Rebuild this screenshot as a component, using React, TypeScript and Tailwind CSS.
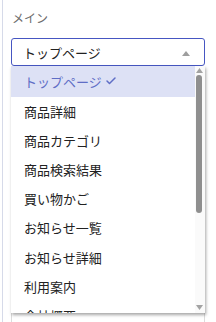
import { Check } from 'lucide-react'

const pages = [
  'トップページ',
  '商品詳細',
  '商品カテゴリ',
  '商品検索結果',
  '買い物かご',
  'お知らせ一覧',
  'お知らせ詳細',
  '利用案内',
  '会社概要',
]

export default function App() {
  const selected = 'トップページ'

  return (
    <div className="h-[322px] w-[216px] overflow-hidden bg-white font-['Noto_Sans_CJK_JP',sans-serif]">
      <div className="ml-[2px] h-full border-l border-[#d6dae9] pl-[8px] pr-[11px] pt-[11px]">
        {/* Label */}
        <div className="pl-[1px] text-[12px] leading-[14px] text-[#6b6b6b]">メイン</div>

        {/* Select + open menu */}
        <div className="relative mt-[13px]">
          <div className="flex h-[28px] items-center justify-between rounded-[3px] border border-[#4656c2] pl-[11px] pr-[14px]">
            <span className="text-[13px] leading-none text-[#222]">{selected}</span>
            <svg width="8" height="5" viewBox="0 0 8 5" className="mt-[2px]">
              <path d="M0 5 L4 0 L8 5 Z" fill="#9e9e9e" />
            </svg>
          </div>

          <div className="absolute left-0 right-0 top-[28px] z-10 flex h-[247px] bg-white shadow-[1px_2px_3px_rgba(0,0,0,0.35)]">
            <ul className="flex-1 overflow-hidden">
              {pages.map((p) => {
                const active = p === selected
                return (
                  <li
                    key={p}
                    className={
                      active
                        ? 'flex h-[30.5px] items-center gap-[3px] bg-[#dde1f5] pl-[13px] text-[13px] leading-none text-[#5f6ec6]'
                        : 'flex h-[29.2px] shrink-0 items-center pl-[13px] text-[13px] leading-none text-[#222]'
                    }
                  >
                    {p}
                    {active && <Check size={12} strokeWidth={3} />}
                  </li>
                )
              })}
            </ul>

            {/* Scrollbar */}
            <div className="flex w-[10px] flex-col items-center bg-[#fafafa] pr-[2px]">
              <svg width="7" height="5" viewBox="0 0 7 5" className="mt-[2px]">
                <path d="M0 5 L3.5 0 L7 5 Z" fill="#a3a3a3" />
              </svg>
              <div className="mt-[2px] h-[138px] w-[6px] rounded-[3px] bg-[#8f8f8f]" />
              <div className="flex-1" />
              <svg width="7" height="5" viewBox="0 0 7 5" className="mb-[3px]">
                <path d="M0 0 L3.5 5 L7 0 Z" fill="#a3a3a3" />
              </svg>
            </div>
          </div>
        </div>

        {/* Next field, mostly hidden under the menu */}
        <div className="mt-[12px] h-[300px] rounded-[3px] border border-[#dcdcdc]" />
      </div>
    </div>
  )
}
